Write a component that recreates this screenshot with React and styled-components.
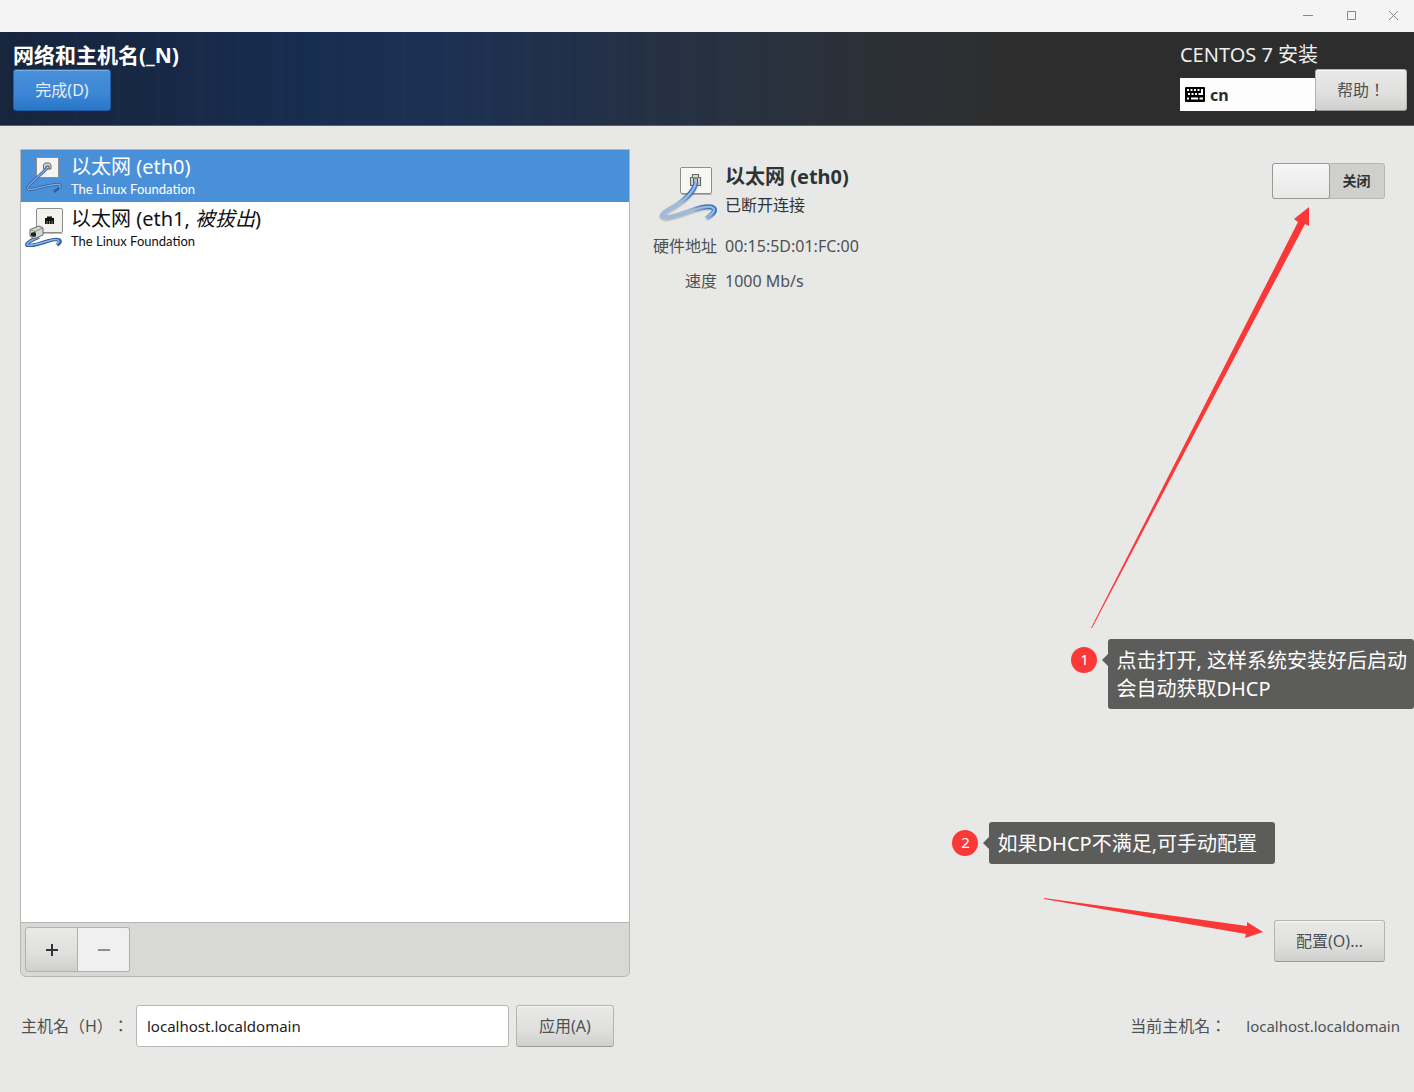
import React, { useState } from 'react';
import styled, { createGlobalStyle, css } from 'styled-components';

const devices = [
  { id: 'eth0', name: '以太网', vendor: 'The Linux Foundation' },
  { id: 'eth1', name: '以太网', state: '被拔出', vendor: 'The Linux Foundation' },
]

const CableIcon = () => (
  <svg width="60" height="60" viewBox="0 0 60 60" fill="none" aria-hidden="true">
    <defs>
      <linearGradient id="tail" gradientUnits="userSpaceOnUse" x1="53" y1="47" x2="46" y2="57">
        <stop offset="0" stopColor="#3f74b8" />
        <stop offset="1" stopColor="#3f74b8" stopOpacity="0.2" />
      </linearGradient>
    </defs>
    <rect x="22.5" y="4.5" width="31" height="26" rx="1.5" fill="#f6f6f4" stroke="#8b8d88" />
    <path d="M24 31.5h29.5" stroke="#555753" strokeOpacity="0.4" />
    <path d="M32.5 22.500v-8h2v-3h6v3h2v8z" fill="#d7d8d4" stroke="#666864" strokeWidth="1.2" />
    <path d="M35.5 22v-7h4v7" fill="#babdb6" stroke="#555753" />
    <path d="M38 20C36 32 23 41 10 48C0 54 4 58 16 54C32 49 45 43 53 45" stroke="#555753" strokeOpacity="0.2" strokeWidth="6" />
    <path d="M38 19C36 31 23 40 10 47C0 53 4 56 16 53C32 49 45 42 53 44C61 46 54 52 48 56" stroke="url(#tail)" strokeWidth="5" />
    <path d="M38 19C36 31 23 40 10 47C0 53 4 56 16 53C32 49 45 42 53 44C59 46 55 50 51 53" stroke="#98bce6" strokeWidth="2.2" />
  </svg>
)

const SmallCableIcon = () => (
  <svg width="40" height="40" viewBox="0 0 40 40" fill="none" aria-hidden="true">
    <rect x="12.500" y="2.500" width="22" height="20" rx="1" fill="#f4f4f2" stroke="#8b8d88" />
    <path d="M19.500 14v-4l1.500-2h4.500l1.500 2v4z" fill="#d7d8d4" stroke="#666864" />
    <path d="M22 14v-3h3v3" stroke="#555753" />
    <path d="M23 13C17 20 8 26 4 32C1 37 13 33 22 31C31 29 40 28 35 33C34 34 32 35 30 37" stroke="#2f5f9f" strokeWidth="2.800" />
    <path d="M23 13C17 20 8 26 4 32C1 37 13 33 22 31C31 29 40 28 35 33" stroke="#83addd" strokeWidth="1.200" />
  </svg>
)

const UnpluggedIcon = () => (
  <svg width="40" height="40" viewBox="0 0 40 40" fill="none" aria-hidden="true">
    <rect x="12.5" y="1.5" width="26" height="24" rx="1.5" fill="#f2f2f0" stroke="#8b8d88" />
    <path d="M13 26.5h25.500" stroke="#555753" strokeOpacity="0.4" />
    <path d="M21 17v-6h2v-1.5h5V11h2v6z" fill="#111" />
    <path d="M23 17v-3M25.500 17v-3M28 17v-3" stroke="#a58a15" />
    <path d="M15 30C10 32 5 34 3 37C1 41 15 37 24 34C34 31 40 33 33 38" stroke="#2f5f9f" strokeWidth="3.600" />
    <path d="M15 30C10 32 5 34 3 37C2 40 15 37 24 34C33 31 38 33 33 37" stroke="#8db5e2" strokeWidth="1.5" />
    <path d="M6 22.500L15 19l4 2v7l-9 4-4-3z" fill="#d3d7cf" stroke="#666864" />
    <path d="M6 22.500l5 2 8-3.500M11 24.500V32" stroke="#888a85" />
    <path d="M7 26l3-1 2 1v3l-2 1-3-1z" fill="#222" />
  </svg>
)

const KeyboardIcon = () => (
  <svg width="20" height="15" viewBox="0 0 20 15" aria-hidden="true">
    <rect width="20" height="15" rx="1" fill="#000" />
    <path
      d="M2 3h2M5.500 3h2M9 3h2M12.500 3h2M16 3h2M3 7h2M6.500 7h2M10 7h2M13.500 7h4.500M2 11.500h2M6 11.500h7M14.500 11.500h3.500M17 3v5"
      stroke="#fff"
      strokeWidth="2"
    />
  </svg>
)

function App() {
  const [selected, setSelected] = useState('eth0');
  const [enabled, setEnabled] = useState(false);
  const [hostname, setHostname] = useState('localhost.localdomain');

  const renderDevices = () => {
    return devices.map(({ id, name, state, vendor }) => (
      <li key={id}>
        <DeviceButton type="button" $active={selected === id} onClick={() => setSelected(id)}>
          {state ? <UnpluggedIcon /> : <SmallCableIcon />}
          <DeviceText>
            <DeviceName>{name} ({id}{state && <>, <em>{state}</em></>})</DeviceName>
            <DeviceVendor>{vendor}</DeviceVendor>
          </DeviceText>
        </DeviceButton>
      </li>
    ))
  }

  return (
    <Page>
      <GlobalStyle />
      <TitleBar>
        <WindowButton type="button" aria-label="Minimize">
          <svg width="12" height="12" viewBox="0 0 12 12"><path d="M1 6.500h10" stroke="#888" /></svg>
        </WindowButton>
        <WindowButton type="button" aria-label="Maximize">
          <svg width="12" height="12" viewBox="0 0 12 12"><path d="M2.500 2.500h8v8h-8z" fill="none" stroke="#888" /></svg>
        </WindowButton>
        <WindowButton type="button" aria-label="Close">
          <svg width="12" height="12" viewBox="0 0 12 12"><path d="M2 2l9 9M11 2l-9 9" stroke="#888" /></svg>
        </WindowButton>
      </TitleBar>

      <Header>
        <HeaderSide>
          <Title>网络和主机名(_N)</Title>
          <DoneButton type="button">完成(D)</DoneButton>
        </HeaderSide>
        <HeaderSide>
          <Product>CENTOS 7 安装</Product>
          <HeaderTools>
            <Layout type="button"><KeyboardIcon />cn</Layout>
            <HelpButton type="button">帮助！</HelpButton>
          </HeaderTools>
        </HeaderSide>
      </Header>

      <Main>
        <ListPanel>
          <DeviceList>{renderDevices()}</DeviceList>
          <ListTools>
            <ToolButton type="button" aria-label="Add">
              <svg width="14" height="14" viewBox="0 0 14 14"><path d="M1 7h12M7 1v12" stroke="#2e3436" strokeWidth="2" /></svg>
            </ToolButton>
            <ToolButton type="button" aria-label="Remove" disabled>
              <svg width="14" height="14" viewBox="0 0 14 14"><path d="M1 7h12" stroke="#8d9091" strokeWidth="2" /></svg>
            </ToolButton>
          </ListTools>
        </ListPanel>

        <Details>
          <DetailsTop>
            <DetailsIcon><CableIcon /></DetailsIcon>
            <div>
              <DetailsName>以太网 (eth0)</DetailsName>
              <Status>已断开连接</Status>
            </div>
            <Switch>
              <input
                type="checkbox"
                role="switch"
                checked={enabled}
                onChange={() => setEnabled(!enabled)}
              />
              <Knob />
              <SwitchText>{enabled ? '打开' : '关闭'}</SwitchText>
            </Switch>
          </DetailsTop>
          <Facts>
            <dt>硬件地址</dt>
            <dd>00:15:5D:01:FC:00</dd>
            <dt>速度</dt>
            <dd>1000 Mb/s</dd>
          </Facts>
          <ConfigureButton type="button">配置(O)...</ConfigureButton>
        </Details>
      </Main>

      <Footer>
        <HostForm onSubmit={(e) => e.preventDefault()}>
          <HostLabel htmlFor="hostname">主机名（H）：</HostLabel>
          <Entry id="hostname" value={hostname} onChange={(e) => setHostname(e.target.value)} />
          <ApplyButton type="submit">应用(A)</ApplyButton>
        </HostForm>
        <Current>
          <CurrentLabel>当前主机名：</CurrentLabel>
          <CurrentName>localhost.localdomain</CurrentName>
        </Current>
      </Footer>

      <SwitchArrow width="220" height="424" viewBox="0 0 220 424" aria-hidden="true">
        <path d="M0 422L207 16L203 13L218 1L218 20L214 18L1 422z" fill="#fb3838" />
      </SwitchArrow>
      <SwitchNote>
        <Badge>1</Badge>
        <Bubble>点击打开, 这样系统安装好后启动<br />会自动获取DHCP</Bubble>
      </SwitchNote>
      <ConfigureNote>
        <Badge>2</Badge>
        <Bubble>如果DHCP不满足,可手动配置</Bubble>
      </ConfigureNote>
      <ConfigureArrow width="220" height="44" viewBox="0 0 220 44" aria-hidden="true">
        <path d="M0 1L203 29L203 25L219 35L201 41L202 37L0 2z" fill="#fb3838" />
      </ConfigureArrow>
    </Page>
  );
}

const GlobalStyle = createGlobalStyle`
  * {
    box-sizing: border-box;
  }

  body {
    margin: 0;
    background: #e8e8e6;
    color: #2e3436;
    font: 16px/24px "Noto Sans", "Noto Sans CJK SC", sans-serif;
  }

  button, input {
    font: inherit;
    color: inherit;
  }
`

// full-width punctuation sits in the middle of its cell
const centeredPunctuation = css`
  font-family: "Noto Sans", "Noto Sans CJK TC", sans-serif;
  text-spacing-trim: space-all;
`

const Page = styled.div`
  position: relative;
  display: flex;
  flex-direction: column;
  min-height: 100vh;
  overflow: hidden;
`

const TitleBar = styled.div`
  display: flex;
  justify-content: flex-end;
  height: 32px;
  padding-bottom: 2px;
  background: #f4f4f4;
`

const WindowButton = styled.button`
  display: grid;
  place-items: center;
  width: 43px;
  padding: 0;
  border: 0;
  background: none;

  &:last-child {
    width: 42px;
  }
`

const Header = styled.header`
  display: flex;
  justify-content: space-between;
  padding: 9px 7px 14px 13px;
  color: #fff;
  border-bottom: 1px solid #596172;
  background:
    linear-gradient(90deg, #2d2d2d00 40%, #2d2d2d 72%),
    repeating-linear-gradient(90deg, #0000 0 9px, #0a1c400c 13px 17px, #0000 20px 31px, #3560a008 34px 37px, #0000 41px),
    repeating-linear-gradient(90deg, #0000 0 23px, #08183a0c 27px 39px, #0000 46px 67px),
    linear-gradient(90deg, #17253d 0%, #172946 12%, #172d50 21%, #1c3153 31%, #21304a 40%, #243349 50%, #2d3b50 72%);
`

const HeaderSide = styled.div`
  display: flex;
  flex-direction: column;
  align-items: flex-start;
`

const Title = styled.h1`
  margin: 0;
  font-size: 21px;
  line-height: 28px;
  font-weight: 700;
`

const Product = styled.div`
  font-size: 20px;
  line-height: 28px;
  color: #eee;
`

const Button = styled.button`
  min-width: 98px;
  height: 42px;
  padding: 0 21px;
  border: 1px solid #b4b4b0;
  border-bottom-color: #999;
  border-radius: 3px;
  background: linear-gradient(#e9e9e8, #dfdfdd 60%, #cfcfcd);
  box-shadow: inset 0 1px #f7f7f6;
  color: #4c5254;
`

const DoneButton = styled(Button)`
  border-color: #1e5fa8;
  background: linear-gradient(#4a90d9, #3b86d6 60%, #2a76c6);
  box-shadow: inset 0 1px #76aee6;
  color: #e6eef7;
`

const HeaderTools = styled.div`
  display: flex;
  align-items: flex-end;
`

const Layout = styled.button`
  display: flex;
  align-items: center;
  gap: 5px;
  width: 135px;
  height: 33px;
  padding: 0 5px;
  border: 0;
  background: #fdfdfd;
  color: #2a2a2a;
  font-weight: 700;
`

const HelpButton = styled(Button)`
  ${centeredPunctuation}
  min-width: 92px;
`

const Main = styled.main`
  flex: 1;
  display: grid;
  grid-template-columns: 610fr 733fr;
  gap: 22px;
  padding: 23px 29px 0 20px;
`

const ListPanel = styled.section`
  display: flex;
  flex-direction: column;
  border: 1px solid #b6b6b3;
  border-radius: 0 0 6px 6px;
  background: #d8d8d6;
`

const DeviceList = styled.ul`
  flex: 1;
  margin: 0;
  padding: 0;
  list-style: none;
  background: #fff;
  border-bottom: 1px solid #b6b6b3;
`

const DeviceButton = styled.button`
  display: flex;
  align-items: center;
  gap: 7px;
  width: 100%;
  padding: 3px 3px 5px;
  border: 0;
  background: #fff;
  color: #111;
  text-align: left;

  ${props => props.$active && css`
    background: #4a90d9;
    color: #fff;
  `}
`

const DeviceText = styled.span`
  display: flex;
  flex-direction: column;
`

const DeviceName = styled.span`
  font-size: 20px;
  line-height: 28px;
`

const DeviceVendor = styled.span`
  font-family: Lato, sans-serif;
  font-size: 13px;
  line-height: 16px;
`

const ListTools = styled.div`
  display: flex;
  padding: 4px;
`

const ToolButton = styled.button`
  display: grid;
  place-items: center;
  width: 53px;
  height: 45px;
  border: 1px solid #b0b0ad;
  border-radius: 3px 0 0 3px;
  background: linear-gradient(#e9e9e8, #dfdfdd 60%, #cfcfcd);

  &:disabled {
    width: 52px;
    border-left: 0;
    border-radius: 0 3px 3px 0;
    background: #f0f0f0;
  }
`

const Details = styled.section`
  display: flex;
  flex-direction: column;
  padding-bottom: 15px;
`

const DetailsTop = styled.div`
  display: grid;
  grid-template-columns: 66px 1fr auto;
  gap: 7px;
  align-items: start;
  padding-top: 14px;
`

const DetailsIcon = styled.div`
  display: flex;
  justify-content: flex-end;
`

const DetailsName = styled.h2`
  margin: 0;
  font-size: 20px;
  line-height: 27px;
  font-weight: 700;
`

const Status = styled.p`
  margin: 0;
  line-height: 30px;
`

const Switch = styled.label`
  position: relative;
  display: flex;
  width: 113px;
  height: 36px;
  border: 1px solid #b6b6b3;
  border-radius: 3px;
  background: #cfcfcd;

  input {
    position: absolute;
    inset: 0;
    width: 100%;
    height: 100%;
    margin: 0;
    opacity: 0;
  }
`

const Knob = styled.span`
  width: 58px;
  margin: -1px;
  border: 1px solid #999a97;
  border-radius: 3px;
  background: linear-gradient(#f6f6f6, #e8e8e7);
`

const SwitchText = styled.span`
  flex: 1;
  font-size: 14px;
  line-height: 34px;
  font-weight: 700;
  text-align: center;
`

const Facts = styled.dl`
  display: grid;
  grid-template-columns: 65px 1fr;
  gap: 11px 8px;
  margin: 11px 0 0;
  color: #4c5254;

  dt {
    text-align: right;
    white-space: nowrap;
  }

  dd {
    margin: 0;
  }
`

const ConfigureButton = styled(Button)`
  align-self: flex-end;
  margin-top: auto;
`

const Footer = styled.footer`
  display: flex;
  justify-content: space-between;
  align-items: center;
  padding: 28px 14px 45px 21px;
  color: #4c5254;
`

const HostForm = styled.form`
  display: flex;
  align-items: center;
  width: 43%;
`

const HostLabel = styled.label`
  ${centeredPunctuation}
  width: 115px;
  white-space: nowrap;
`

const Entry = styled.input`
  flex: 1;
  min-width: 0;
  height: 42px;
  padding: 0 10px;
  border: 1px solid #b6b6b3;
  border-radius: 3px;
  background: #fff;
  color: #222;
  font-size: 15px;
`

const ApplyButton = styled(Button)`
  margin-left: 7px;
`

const Current = styled.div`
  display: flex;
  gap: 20px;
`

const CurrentLabel = styled.span`
  ${centeredPunctuation}
`

const CurrentName = styled.span`
  font-size: 15px;
`

const Note = styled.div`
  position: absolute;
  display: flex;
  align-items: flex-start;
  gap: 11px;
`

const SwitchNote = styled(Note)`
  top: 639px;
  right: 0;
`

const ConfigureNote = styled(Note)`
  right: 139px;
  bottom: 228px;

  > :last-child {
    padding-right: 18px;
  }
`

const Badge = styled.span`
  width: 26px;
  height: 26px;
  margin-top: 8px;
  border-radius: 50%;
  background: #fb3838;
  color: #fff;
  font-size: 15px;
  line-height: 24px;
  text-align: center;
`

const Bubble = styled.p`
  position: relative;
  margin: 0;
  padding: 8px 7px 6px 8px;
  border-radius: 3px;
  background: #5c5c5a;
  color: #fff;
  font-size: 20px;
  line-height: 28px;
  white-space: nowrap;

  &::before {
    content: '';
    position: absolute;
    top: 15px;
    left: -6px;
    border: 6px solid transparent;
    border-left: 0;
    border-right-color: #5c5c5a;
  }
`

const SwitchArrow = styled.svg`
  position: absolute;
  top: 206px;
  right: 103px;
  pointer-events: none;
`

const ConfigureArrow = styled.svg`
  position: absolute;
  right: 150px;
  bottom: 151px;
  pointer-events: none;
`

export default App;
